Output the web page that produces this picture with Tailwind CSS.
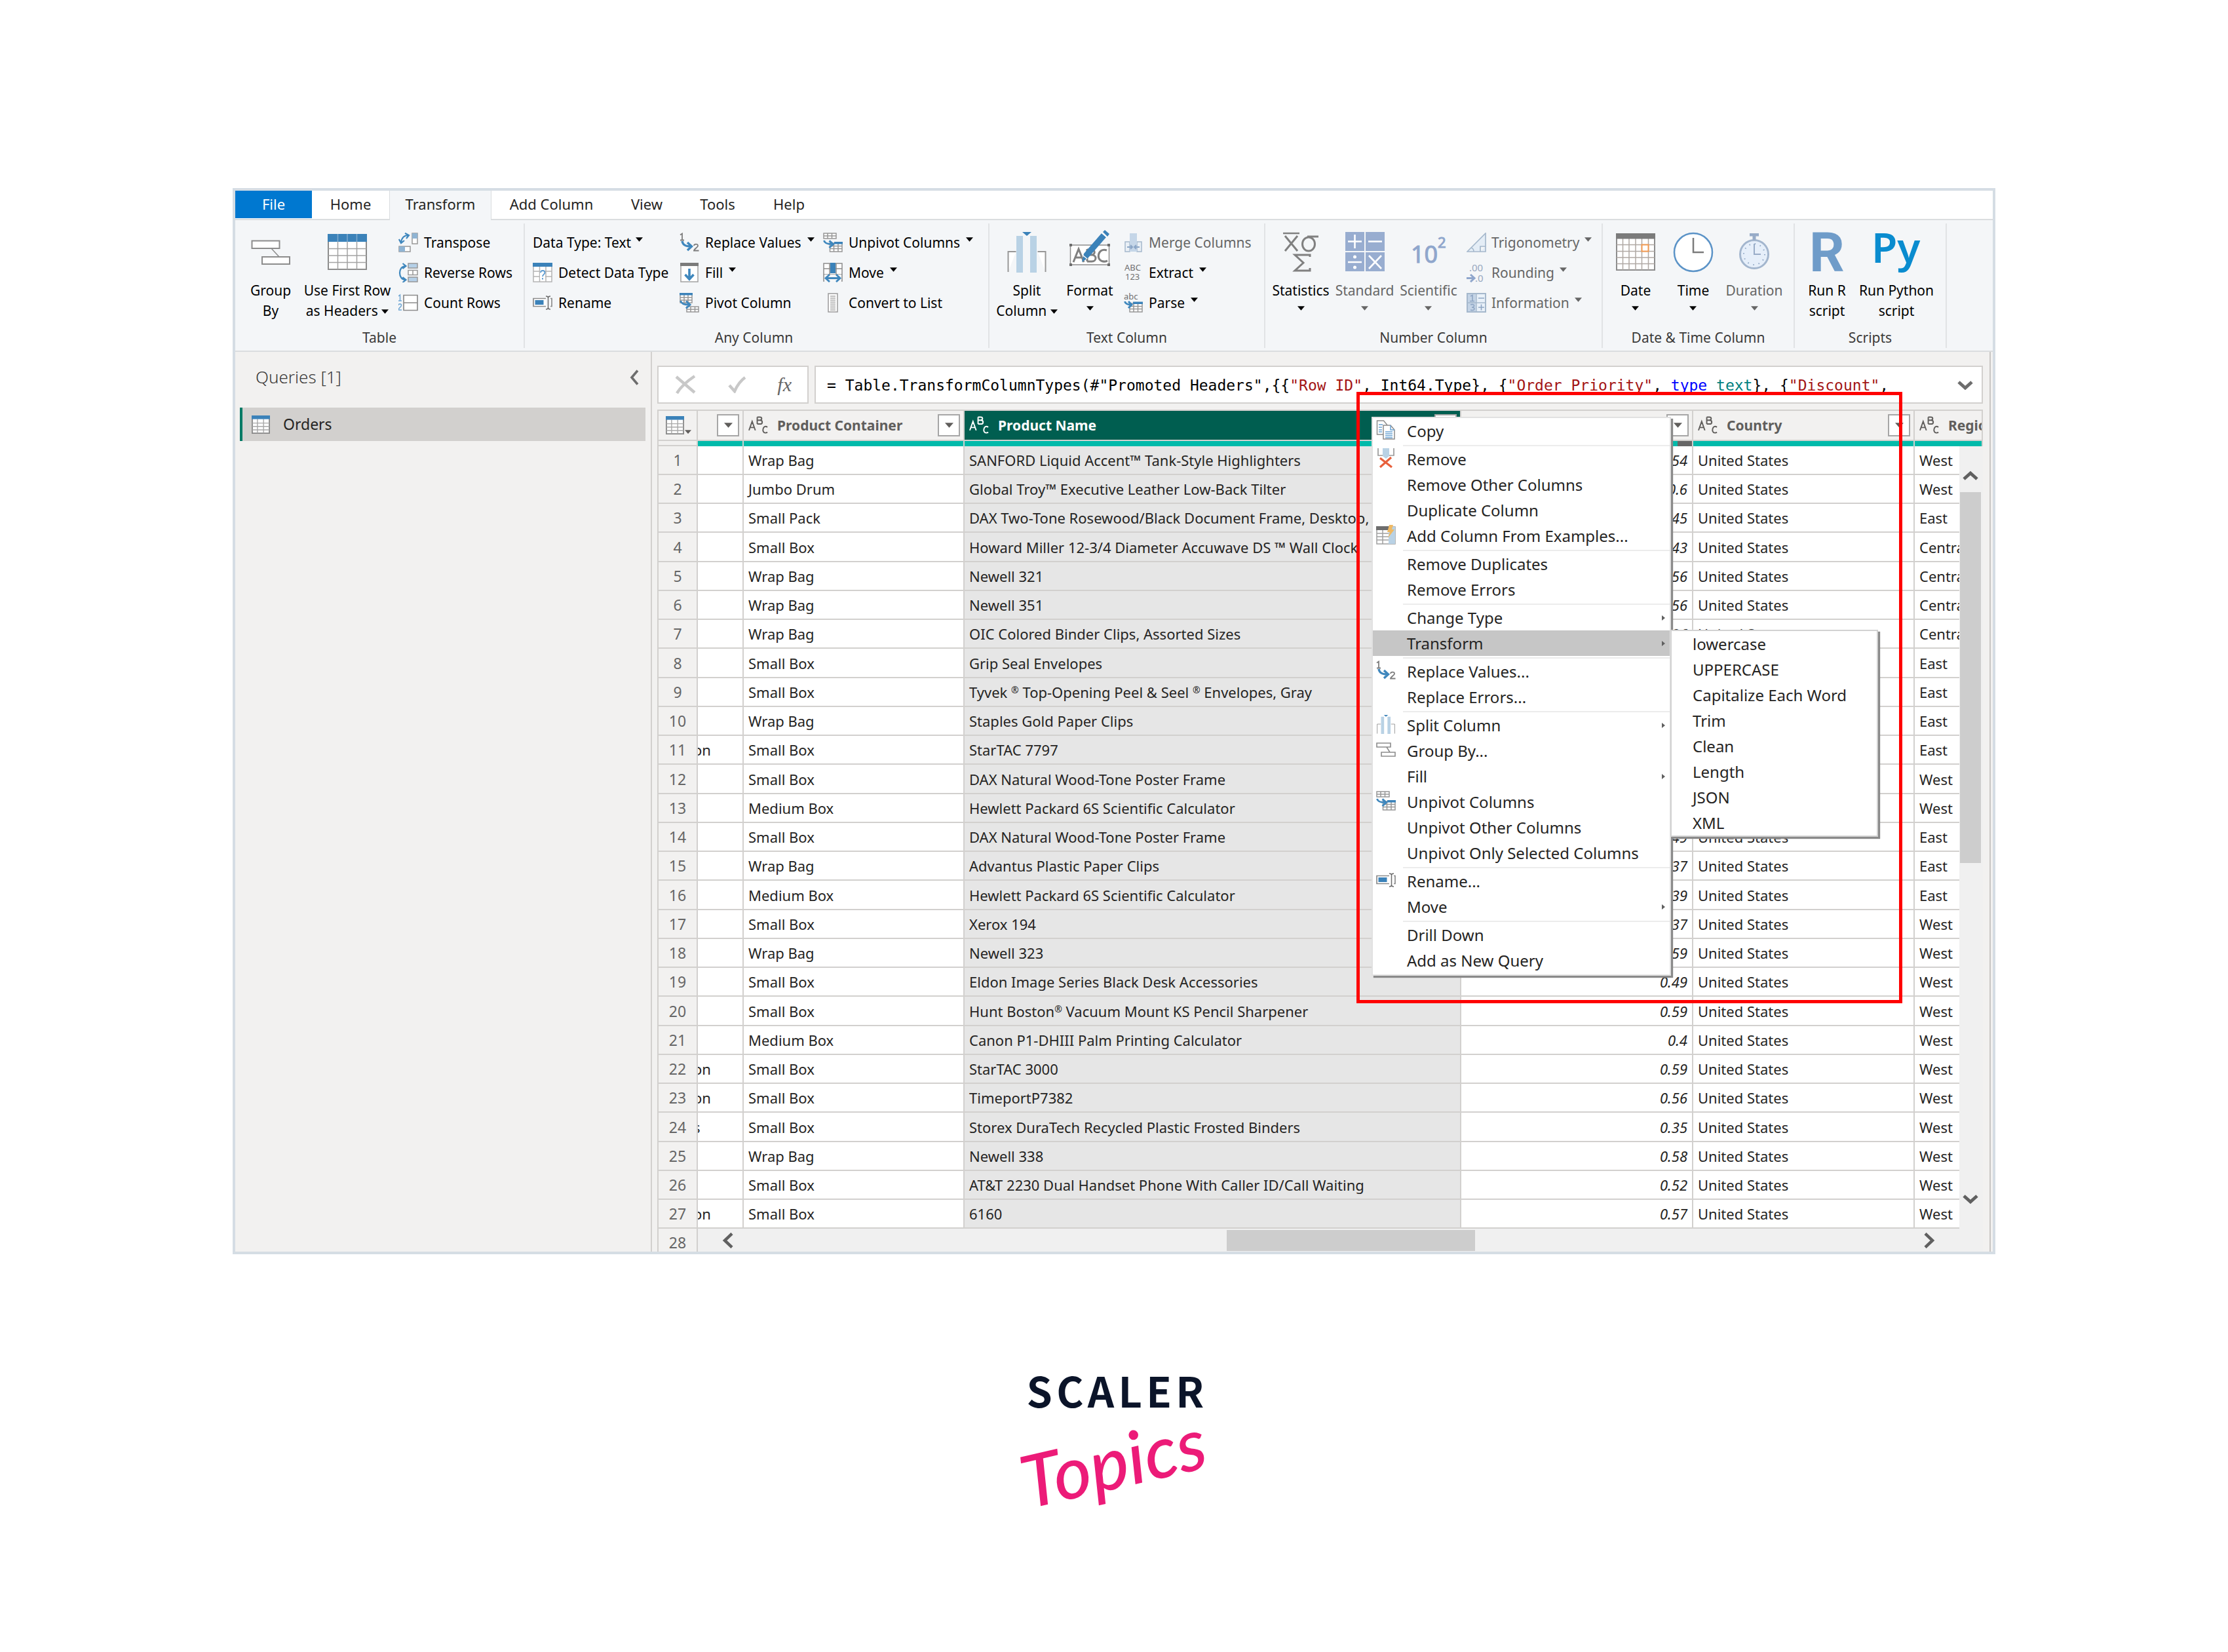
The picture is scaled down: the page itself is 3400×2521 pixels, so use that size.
<!DOCTYPE html>
<html lang="en">
<head>
<meta charset="utf-8">
<title>Power Query Editor - Transform column</title>
<script src="https://cdn.jsdelivr.net/npm/@tailwindcss/browser@4"></script>
</head>
<body class="bg-white text-[#252423]" style="font-family:'Noto Sans','Open Sans',sans-serif">

<!-- Shared icon symbols -->
<svg class="hidden" aria-hidden="true">
  <symbol id="caret" viewBox="0 0 12 8"><path d="M0 0h12L6 7z" fill="currentColor"/></symbol>
  <symbol id="table" viewBox="0 0 30 30">
    <rect x="1" y="1" width="28" height="28" fill="#fff" stroke="#8a8a8a" stroke-width="2"/>
    <path d="M9.500 6v23M19.500 6v23M1 12.500h28M1 18h28M1 23.500h28" stroke="#a8a8a8" stroke-width="1.500"/>
    <rect width="30" height="6" fill="#3b82b9"/>
  </symbol>
  <symbol id="groupby" viewBox="0 0 60 38">
    <rect x="1.500" y="1.500" width="42" height="11.500" fill="#fff" stroke="#8c8c8c" stroke-width="2"/>
    <rect x="17" y="26" width="42" height="11" fill="#fff" stroke="#8c8c8c" stroke-width="2"/>
    <path d="M31 13l12 13" stroke="#8c8c8c" stroke-width="1.500"/>
  </symbol>
  <symbol id="replace" viewBox="0 0 30 30">
    <path d="M1 3.500L4 1.500v10M1 11.500h6" fill="none" stroke="#7d7d7d" stroke-width="1.800"/>
    <path d="M22 20c0-3 6-3.500 6 0 0 2.500-6 5-6 7.500h7.500" fill="none" stroke="#7d7d7d" stroke-width="1.800"/>
    <path d="M4 13c1 6 5 8 13 8M12 15l6.500 6-6.500 6" fill="none" stroke="#3f87bd" stroke-width="3.400"/>
  </symbol>
  <symbol id="unpivot" viewBox="0 0 30 30">
    <path d="M1 1h19v8H1zM7 1v8M13.500 1v8M1 5h19" fill="#fff" stroke="#979797" stroke-width="1.500"/>
    <path d="M10.500 16h18.500v13H10.500zM16.500 16v13M23 16v13M10.500 20.500h18.500M10.500 24.500h18.500" fill="#fff" stroke="#979797" stroke-width="1.500"/>
    <rect x="17" y="14" width="13" height="3.500" fill="#3b82b9"/>
    <path d="M1.500 12c1 4 4 5.500 12 5.500M9.500 12.500l6 5-6 5.500" fill="none" stroke="#3f87bd" stroke-width="3"/>
  </symbol>
  <symbol id="pivot" viewBox="0 0 30 30">
    <path d="M1 1h18v14H1zM7 1v14M13 1v14M1 7h18M1 11h18" fill="#fff" stroke="#979797" stroke-width="1.500"/>
    <rect width="20" height="3.500" fill="#3b82b9"/>
    <path d="M11 21h18v8H11zM17 21v8M23.500 21v8M11 25h18" fill="#fff" stroke="#979797" stroke-width="1.500"/>
    <path d="M1.500 12c1 4 4 6 13 6M10 12.500l6 5.500-6 5.500" fill="none" stroke="#3f87bd" stroke-width="3"/>
  </symbol>
  <symbol id="rename" viewBox="0 0 30 22">
    <path d="M20 4.500H1v12h19M27 4.500h2v12h-2" fill="#fff" stroke="#8c8c8c" stroke-width="1.700"/>
    <rect x="3.500" y="7" width="13" height="7" fill="#3b82b9"/>
    <path d="M20 1c2 0 3.500.5 3.500 2.500v15c0 2-1.500 2.500-3.500 2.500M27 1c-2 0-3.500.5-3.500 2.500v15c0 2 1.500 2.500 3.500 2.500" fill="none" stroke="#6d6d6d" stroke-width="1.500"/>
  </symbol>
  <symbol id="split" viewBox="0 0 60 64">
    <path d="M1.500 63V32h12M46.500 32h12v31" fill="#fff" stroke="#979797" stroke-width="2"/>
    <rect x="14" y="8" width="10" height="56" fill="#b9d2e5"/><rect x="35" y="8" width="10" height="56" fill="#b9d2e5"/>
    <path d="M23 2h14l-7 6z" fill="#3b82b9"/>
  </symbol>
  <symbol id="abc" viewBox="0 0 32 30">
    <path d="M1 23L6 9l5 14M3 18.500h6M14 2v11M14 2h4c4 0 4 5 0 5h-4h4.500c4.500 0 4.500 6 0 6H14M30 18c-7-5-10 9-3 9 1.500 0 2-.3 3-1" fill="none" stroke="currentColor" stroke-width="2"/>
  </symbol>
  <symbol id="chev" viewBox="0 0 24 14"><path d="M2 2l10 9 10-9" fill="none" stroke="currentColor" stroke-width="5"/></symbol>
</svg>

<main class="px-[355px] pt-[287px]">
<section class="relative border-4 border-[#d5dde4] bg-[#f2f1f0]">

  <!-- Tab strip -->
  <nav class="flex h-[45px] border-b-2 border-[#dadddf] bg-white text-[22px] leading-[41px]">
    <a href="#" class="h-[42px] w-[117px] bg-[#0078d0] text-center text-white">File</a>
    <a href="#" class="w-[118px] text-center">Home</a>
    <a href="#" class="h-[45px] w-[156px] border-x border-[#dadddf] bg-[#f4f6f8] text-center">Transform</a>
    <a href="#" class="w-[183px] text-center">Add Column</a>
    <a href="#" class="w-[108px] text-center">View</a>
    <a href="#" class="w-[108px] text-center">Tools</a>
    <a href="#" class="w-[110px] text-center">Help</a>
  </nav>

  <!-- Ribbon -->
  <div class="flex h-[201px] border-b-2 border-[#dadddf] bg-[#f4f6f8] pt-[5px] pb-1 text-[21px] leading-[31px] whitespace-nowrap text-black">
    <div class="flex w-[442px] flex-col justify-between border-r-2 border-[#e1e3e5]">
      <div class="flex">
        <button class="flex w-[108px] flex-col items-center pt-[7px]">
          <span class="flex h-[80px] items-start pt-[18px]"><svg class="h-[38px] w-[60px]"><use href="#groupby"/></svg></span>
          <span>Group<br>By</span>
        </button>
        <button class="flex w-[126px] flex-col items-center pt-[7px]">
          <span class="flex h-[80px] items-start pt-[9px]">
            <svg class="h-[55px] w-[60px]" viewBox="0 0 60 55"><rect x="1" y="1" width="58" height="53" fill="#fff" stroke="#8c8c8c" stroke-width="2"/><path d="M1 22.500h58M1 33h58M1 43.500h58M15.500 12v42M30 12v42M44.500 12v42" stroke="#a2a2a2" stroke-width="1.500"/><path d="M0 0h60v12H0z" fill="#3b82b9"/><path d="M15.500 0v12M30 0v12M44.500 0v12" stroke="#7fabcf" stroke-width="1.500"/></svg>
          </span>
          <span>Use First Row<br>as Headers <svg class="inline h-[8px] w-[11px] align-middle"><use href="#caret"/></svg></span>
        </button>
        <div class="flex flex-col pt-[6px] pl-[15px] leading-[46px]">
          <button class="flex items-center gap-[9px]"><svg class="h-[30px] w-[30px]" viewBox="0 0 30 30"><rect x="21" y="1" width="8" height="16" fill="#fff" stroke="#979797" stroke-width="1.500"/><rect x="21" y="1" width="8" height="8" fill="#8fb4d3"/><rect x="1" y="21" width="17" height="8" fill="#fff" stroke="#979797" stroke-width="1.500"/><rect x="1" y="21" width="9" height="8" fill="#8fb4d3"/><path d="M15 4C8 4 5 8 4 15M10 .8L16 4l-4 5M.8 10L4 16l5-4" fill="none" stroke="#3f87bd" stroke-width="2.200"/></svg>Transpose</button>
          <button class="flex items-center gap-[9px]"><svg class="h-[30px] w-[30px]" viewBox="0 0 30 30"><g stroke="#979797" stroke-width="1.500"><rect x="15" y="1" width="14" height="7" fill="#b5d0e8"/><rect x="15" y="11.500" width="14" height="7" fill="#fff"/><path d="M22 11.500v7"/><rect x="15" y="22" width="14" height="7" fill="#b5d0e8"/></g><path d="M11 5C-1 5-1 26 11 26M6.500 1l5 4-5 4M6.500 22l5 4-5 4" fill="none" stroke="#3f87bd" stroke-width="2.200"/></svg>Reverse Rows</button>
          <button class="flex items-center gap-[9px]"><svg class="h-[30px] w-[30px]" viewBox="0 0 30 30"><path d="M8 3.500h21v23H8zM8 15h21" fill="#fff" stroke="#8c8c8c" stroke-width="1.700"/><path d="M0 5l2.500-2v9M0 12h5M0 19c0-3 4.500-3 4.500 0 0 2.500-4.500 4-4.500 7h5" fill="none" stroke="#6fa6d3" stroke-width="1.500"/></svg>Count Rows</button>
        </div>
      </div>
      <span class="text-center text-[#3b3a39]">Table</span>
    </div>

    <div class="flex w-[709px] flex-col justify-between border-r-2 border-[#e1e3e5]">
      <div class="flex pt-[6px] pl-[12px] leading-[46px]">
        <div class="flex w-[224px] flex-col">
          <button class="flex items-center gap-[7px]">Data Type: Text <svg class="mb-2 h-[8px] w-[11px]"><use href="#caret"/></svg></button>
          <button class="flex items-center gap-[9px]"><svg class="h-[30px] w-[30px]" viewBox="0 0 30 30"><path d="M1 1h28v28H1zM10.500 1v28M20 1v28M1 13h28M1 21h28" fill="#fff" stroke="#b4b4b4" stroke-width="1.500"/><path d="M11 12h8v13h-8z" fill="#fff"/><path d="M0 0h30v6H0z" fill="#3b82b9"/><path d="M12 15c0-4 6.500-4 6.500 0 0 2.500-3.500 3-3.500 6M15 23v2.500" fill="none" stroke="#5c9bd0" stroke-width="1.800"/></svg>Detect Data Type</button>
          <button class="flex items-center gap-[9px]"><svg class="h-[22px] w-[30px]"><use href="#rename"/></svg>Rename</button>
        </div>
        <div class="flex w-[219px] flex-col">
          <button class="flex items-center gap-[9px]"><svg class="h-[30px] w-[30px]"><use href="#replace"/></svg>Replace Values <svg class="mb-2 h-[8px] w-[11px]"><use href="#caret"/></svg></button>
          <button class="flex items-center gap-[9px]"><svg class="h-[30px] w-[30px]" viewBox="0 0 30 30"><rect x="2" y="1" width="26" height="28" fill="#fff" stroke="#a0a0a0" stroke-width="1.500"/><path d="M1 0h28v5H1z" fill="#7b7b7b"/><path d="M15 9v15M8.500 18l6.500 7 6.500-7" fill="none" stroke="#3f87bd" stroke-width="3.600"/></svg>Fill <svg class="mb-2 h-[8px] w-[11px]"><use href="#caret"/></svg></button>
          <button class="flex items-center gap-[9px]"><svg class="h-[30px] w-[30px]"><use href="#pivot"/></svg>Pivot Column</button>
        </div>
        <div class="flex flex-col">
          <button class="flex items-center gap-[9px]"><svg class="h-[30px] w-[30px]"><use href="#unpivot"/></svg>Unpivot Columns <svg class="mb-2 h-[8px] w-[11px]"><use href="#caret"/></svg></button>
          <button class="flex items-center gap-[9px]"><svg class="h-[30px] w-[30px]" viewBox="0 0 30 30"><path d="M1 1h28v27H1zM10 1v27M20 1v27M1 9h28M1 18h28" fill="#fff" stroke="#8c8c8c" stroke-width="1.500"/><path d="M11 0h8v16h-8z" fill="#3b82b9"/><path d="M2 18h26v12H2z" fill="#f4f6f8"/><path d="M5 23.500h20M10 18l-6 5.500 6 5.500M20 18l6 5.500-6 5.500" fill="none" stroke="#3f87bd" stroke-width="2.800"/></svg>Move <svg class="mb-2 h-[8px] w-[11px]"><use href="#caret"/></svg></button>
          <button class="flex items-center gap-[9px]"><svg class="h-[30px] w-[30px]" viewBox="0 0 30 30"><rect x="8" y="1" width="14" height="28" fill="#fff" stroke="#9a9a9a" stroke-width="1.500"/><path d="M11 5h8M11 8h8M11 11h8M11 14h8M11 17h8M11 20h8M11 23h8M11 26h8" stroke="#a9a9a9" stroke-width="1.300"/></svg>Convert to List</button>
        </div>
      </div>
      <span class="pr-2 text-center text-[#3b3a39]">Any Column</span>
    </div>

    <div class="flex w-[421px] flex-col justify-between border-r-2 border-[#e1e3e5]">
      <div class="flex pl-[5px]">
        <button class="flex w-[104px] flex-col items-center pt-[7px]">
          <span class="flex h-[80px] items-start pt-[4px]"><svg class="h-[64px] w-[60px]"><use href="#split"/></svg></span>
          <span>Split<br>Column <svg class="inline h-[8px] w-[11px] align-middle"><use href="#caret"/></svg></span>
        </button>
        <button class="flex w-[88px] flex-col items-center pt-[7px]">
          <span class="flex h-[80px] items-start pt-[3px]">
            <svg class="h-[56px] w-[64px]" viewBox="0 0 64 56"><rect x="2.500" y="23" width="59" height="30" fill="#fff" stroke="#8c8c8c" stroke-width="1.500"/><g fill="#6d6d6d"><path d="M1 21h4v4H1zM59 21h4v4h-4zM1 51h4v4H1zM59 51h4v4h-4z"/></g><path d="M7 49l8-20 8 20M10 42h10M28 29v19M28 30h6c7 0 7 8 0 8h-6h7c8 0 8 10 0 10h-7M58 31c-15-5-18 19-2 17l3-1" fill="none" stroke="#808080" stroke-width="3"/><path d="M20 49l3-13L50 5l7 6-27 31z" fill="#3b82b9"/><path d="M52 3l3-3 7 6-3 4z" fill="#3b82b9"/><path d="M22 39l6 5M50 4l8 7" stroke="#fff" stroke-width="1.500"/></svg>
          </span>
          <span>Format<br><svg class="mx-auto mt-2 h-[8px] w-[11px]"><use href="#caret"/></svg></span>
        </button>
        <div class="flex flex-col pt-[6px] pl-[8px] leading-[46px]">
          <button class="flex items-center gap-[9px] text-[#666]"><svg class="h-[30px] w-[29px]" viewBox="0 0 29 30"><path d="M2 14h7v15H2zM20 14h7v15h-7z" fill="#eaf0f6" stroke="#a5b8cc" stroke-width="1.500"/><rect x="9" y="1" width="11" height="28" fill="#c5d6e8"/><path d="M5 22h7M24 22h-7M10 19l3 3-3 3M19 19l-3 3 3 3" fill="none" stroke="#8ba6c6" stroke-width="2"/></svg>Merge Columns</button>
          <button class="flex items-center gap-[9px]"><svg class="h-[30px] w-[29px]" viewBox="0 0 29 30"><g font-size="13" fill="#707070"><text x="1" y="12">ABC</text><text x="2" y="26">123</text></g></svg>Extract <svg class="mb-2 h-[8px] w-[11px]"><use href="#caret"/></svg></button>
          <button class="flex items-center gap-[9px]"><svg class="h-[30px] w-[29px]" viewBox="0 0 29 30"><text x="0" y="10" font-size="13" fill="#707070">abc</text><path d="M9 16h19v13H9zM15 16v13M21.500 16v13M9 20.500h19M9 24.500h19" fill="#fff" stroke="#979797" stroke-width="1.500"/><path d="M14 13.500h15v3.500H14z" fill="#3b82b9"/><path d="M1.500 13c1 4 4 5 10 5M7 13l5 5-5 5" fill="none" stroke="#3f87bd" stroke-width="3"/></svg>Parse <svg class="mb-2 h-[8px] w-[11px]"><use href="#caret"/></svg></button>
        </div>
      </div>
      <span class="text-center text-[#3b3a39]">Text Column</span>
    </div>

    <div class="flex w-[515px] flex-col justify-between border-r-2 border-[#e1e3e5]">
      <div class="flex pl-[5px]">
        <button class="flex w-[98px] flex-col items-center pt-[7px]">
          <span class="flex h-[80px] items-start pt-[6px]">
            <svg class="h-[62px] w-[56px]" viewBox="0 0 56 62"><g fill="none" stroke="#808080" stroke-width="3"><path d="M1 2h25" stroke-width="2.500"/><path d="M4 6l19 23M23 6L4 29"/><ellipse cx="40" cy="18.500" rx="9.500" ry="10.500"/><path d="M38 7h17"/><path d="M42 38v-3H19l13 12-13 12h23v-4"/></g></svg>
          </span>
          <span>Statistics<br><svg class="mx-auto mt-2 h-[8px] w-[11px]"><use href="#caret"/></svg></span>
        </button>
        <button class="flex w-[97px] flex-col items-center pt-[7px] text-[#666]">
          <span class="flex h-[80px] items-start pt-[6px]">
            <svg class="h-[61px] w-[60px]" viewBox="0 0 60 61"><path d="M0 0h29v29H0zM31 0h29v29H31zM0 31h29v29H0zM31 31h29v29H31z" fill="#98add0"/><path d="M4 14.500h21M14.500 4v21M35 14.500h21M4 46h21M36 36l19 20M55 36L36 56" stroke="#fff" stroke-width="2.600"/><circle cx="14.500" cy="38" r="2.500" fill="#fff"/><circle cx="14.500" cy="54" r="2.500" fill="#fff"/></svg>
          </span>
          <span>Standard<br><svg class="mx-auto mt-2 h-[8px] w-[11px]"><use href="#caret"/></svg></span>
        </button>
        <button class="flex w-[98px] flex-col items-center pt-[7px] text-[#666]">
          <span class="flex h-[80px] items-start pt-[8px]">
            <svg class="h-[60px] w-[56px]" viewBox="0 0 56 60"><g fill="#8fa6cc" stroke="#8fa6cc"><text x="1" y="45" font-size="36" stroke-width="1">10</text><text x="42" y="22" font-size="22">2</text></g></svg>
          </span>
          <span>Scientific<br><svg class="mx-auto mt-2 h-[8px] w-[11px]"><use href="#caret"/></svg></span>
        </button>
        <div class="flex flex-col pt-[6px] pl-[9px] leading-[46px] text-[#666]">
          <button class="flex items-center gap-[8px]"><svg class="h-[30px] w-[30px]" viewBox="0 0 30 30"><path d="M1 29L29 1v28zM29 21h-8v8M7 23c3 1 4 3 4 6" fill="#e4edf6" stroke="#a5b8cc" stroke-width="1.700"/></svg>Trigonometry <svg class="mb-2 h-[8px] w-[11px]"><use href="#caret"/></svg></button>
          <button class="flex items-center gap-[8px]"><svg class="h-[30px] w-[30px]" viewBox="0 0 30 30"><g font-size="15" fill="#98a8c0"><text x="4" y="13">.00</text><text x="13" y="29">.0</text></g><path d="M0 23.500h11M6 18l6 5.500-6 5.500" fill="none" stroke="#8fa6cc" stroke-width="3"/></svg>Rounding <svg class="mb-2 h-[8px] w-[11px]"><use href="#caret"/></svg></button>
          <button class="flex items-center gap-[8px]"><svg class="h-[30px] w-[30px]" viewBox="0 0 30 30"><path d="M1 1h28v28H1z" fill="#e9f1f9" stroke="#a5b8cc" stroke-width="2"/><path d="M2 2h12v26H2z" fill="#c4d4e6"/><path d="M15 1v28M1 15h28" stroke="#a5b8cc" stroke-width="1.500"/><path d="M18 8h9M18 22h9M22.500 17.500v9M6 5l3-1.500v9M5 12.500h7M6 18c7-2 7 4 2 4 6 0 5 6-2 4" fill="none" stroke="#8fa6c4" stroke-width="1.600"/></svg>Information <svg class="mb-2 h-[8px] w-[11px]"><use href="#caret"/></svg></button>
        </div>
      </div>
      <span class="text-center text-[#3b3a39]">Number Column</span>
    </div>

    <div class="flex w-[293px] flex-col justify-between border-r-2 border-[#e1e3e5]">
      <div class="flex pl-[6px]">
        <button class="flex w-[88px] flex-col items-center pt-[7px]">
          <span class="flex h-[80px] items-start pt-[8px]">
            <svg class="h-[57px] w-[60px]" viewBox="0 0 60 57"><path d="M1 1h58v55H1z" fill="#fff" stroke="#8c8c8c" stroke-width="2"/><path d="M10.500 8v48M20 8v48M30 8v48M39.500 8v48M49.500 8v48M1 17.500h58M1 27.500h58M1 37h58M1 46.500h58" stroke="#b0a9a4" stroke-width="1.500"/><path d="M0 0h60v8.500H0z" fill="#7b7b7b"/><path d="M39.500 17.500h10v10h-10z" fill="#fff" stroke="#f29a52" stroke-width="2"/></svg>
          </span>
          <span>Date<br><svg class="mx-auto mt-2 h-[8px] w-[11px]"><use href="#caret"/></svg></span>
        </button>
        <button class="flex w-[88px] flex-col items-center pt-[7px]">
          <span class="flex h-[80px] items-start pt-[6px]">
            <svg class="h-[62px] w-[62px]" viewBox="0 0 62 62"><circle cx="31" cy="31" r="29" fill="#fff" stroke="#5b93c7" stroke-width="2.500"/><path d="M31 9v22h16" fill="none" stroke="#7b7b7b" stroke-width="2.500"/></svg>
          </span>
          <span>Time<br><svg class="mx-auto mt-2 h-[8px] w-[11px]"><use href="#caret"/></svg></span>
        </button>
        <button class="flex w-[98px] flex-col items-center pt-[7px] text-[#666]">
          <span class="flex h-[80px] items-start pt-[8px]">
            <svg class="h-[56px] w-[48px]" viewBox="0 0 48 56"><circle cx="24" cy="32" r="21.500" fill="#e6effa" stroke="#a3b6ce" stroke-width="3"/><circle cx="24" cy="32" r="16" fill="none" stroke="#8fa6c4" stroke-width="2" stroke-dasharray="1.500 6.900"/><path d="M17 2h14M24 2v8" stroke="#98acc8" stroke-width="5"/><path d="M24 16v16h10" fill="none" stroke="#98acc8" stroke-width="2"/></svg>
          </span>
          <span>Duration<br><svg class="mx-auto mt-2 h-[8px] w-[11px]"><use href="#caret"/></svg></span>
        </button>
      </div>
      <span class="text-center text-[#3b3a39]">Date &amp; Time Column</span>
    </div>

    <div class="flex w-[232px] flex-col justify-between border-r-2 border-[#e1e3e5]">
      <div class="flex pl-[10px]">
        <button class="flex w-[78px] flex-col items-center pt-[7px]">
          <span class="flex h-[80px] items-start pt-[5px]"><svg class="h-[62px] w-[56px]" viewBox="0 0 56 62"><text x="1" y="61" font-family="Roboto" font-weight="700" font-size="84" fill="#6f9cc9">R</text></svg></span>
          <span>Run R<br>script</span>
        </button>
        <button class="flex w-[134px] flex-col items-center pt-[7px]">
          <span class="flex h-[80px] items-start pt-[5px]"><svg class="h-[68px] w-[74px]" viewBox="0 0 74 68"><text x="-1" y="48" font-weight="600" font-size="64" fill="#0a8ccf">Py</text></svg></span>
          <span>Run Python<br>script</span>
        </button>
      </div>
      <span class="text-center text-[#3b3a39]">Scripts</span>
    </div>
  </div>

  <!-- Workspace -->
  <div class="flex">
    <aside class="w-[636px] shrink-0 border-r-2 border-[#d2d0ce] pr-[8px] pl-[7px]">
      <div class="flex h-[85px] items-center justify-between pr-[10px] pb-[8px] pl-[24px] text-[26px] font-light text-[#3b3a39]">
        <h2>Queries [1]</h2>
        <button aria-label="Collapse queries"><svg class="h-[24px] w-[14px] text-[#6d6d6d]" viewBox="0 0 14 24"><path d="M12 1.500L3 12l9 10.500" fill="none" stroke="currentColor" stroke-width="3.600"/></svg></button>
      </div>
      <a href="#" class="flex h-[51px] items-center gap-[19px] border-l-4 border-[#007a65] bg-[#d2d0ce] pl-[13px] text-[23px]"><svg class="h-[28px] w-[30px]"><use href="#table"/></svg>Orders</a>
    </aside>

    <div class="mr-[3px] min-w-0 flex-1 border-r-2 border-[#c8c6c4] pt-[21px] pr-[10px] pl-[8px]">
      <!-- Formula bar -->
      <div class="mb-[9px] flex h-[58px] gap-[9px]">
        <div class="flex w-[231px] items-center justify-between border-2 border-[#d2d0ce] bg-white pr-[24px] pl-[24px]">
          <button aria-label="Cancel"><svg class="h-[30px] w-[34px]" viewBox="0 0 34 30"><path d="M3 3l28 24M31 2C22 8 10 18 4 28" fill="none" stroke="#c8c8c8" stroke-width="4.500"/></svg></button>
          <button aria-label="Commit"><svg class="h-[26px] w-[28px]" viewBox="0 0 28 26"><path d="M2 14l8 9C14 14 19 7 26 2" fill="none" stroke="#c8c8c8" stroke-width="4.500"/></svg></button>
          <button class="text-[30px] leading-none text-[#666] italic" style="font-family:'Liberation Serif',serif">fx</button>
        </div>
        <div class="flex min-w-0 flex-1 items-center justify-between border-2 border-[#d2d0ce] bg-white pt-[2px] pr-[13px] pl-[17px]">
          <code class="text-[23px] whitespace-pre text-black" style="font-family:'DejaVu Sans Mono',monospace">= Table.TransformColumnTypes(#"Promoted Headers",{{<span class="text-[#a31515]">"Row ID"</span>, Int64.Type}, {<span class="text-[#a31515]">"Order Priority"</span>, <span class="text-[#0000ff]">type</span> <span class="text-[#008080]">text</span>}, {<span class="text-[#a31515]">"Discount"</span>,</code>
          <button aria-label="Expand formula bar" class="text-[#6d6d6d]"><svg class="h-[14px] w-[24px]"><use href="#chev"/></svg></button>
        </div>
      </div>

      <!-- Data preview -->
      <div class="relative overflow-hidden">
        <table class="w-full table-fixed border-separate border-spacing-0 border-t-2 border-l-2 border-[#d2d0ce] text-[22px] leading-[42px] whitespace-nowrap">
          <colgroup><col class="w-[60px]"><col class="w-[70px]"><col class="w-[337px]"><col class="w-[758px]"><col class="w-[354px]"><col class="w-[338px]"><col></colgroup>
          <thead class="text-left text-[21px] text-[#605e5c]">
            <tr class="h-[46px]" id="head"></tr>
            <tr class="h-[8px]" id="quality"></tr>
          </thead>
          <tbody id="rows"></tbody>
        </table>
        <!-- Vertical scroll bar -->
        <div class="absolute top-[56px] right-0 bottom-0 flex w-[36px] flex-col items-center bg-[#f0f0f0] pr-[2px] text-[#606060]">
          <svg class="mt-[37px] h-[16px] w-[24px] rotate-180"><use href="#chev"/></svg>
          <div class="mt-[17px] h-[566px] w-[32px] bg-[#cdcdcd]"></div>
          <svg class="mt-auto mb-[72px] h-[16px] w-[24px]"><use href="#chev"/></svg>
        </div>
      </div>
    </div>
  </div>

  <!-- Column context menu -->
  <ul id="menu" class="absolute top-[345px] left-[1734px] w-[457px] border-2 border-[#e1e1e1] bg-white pb-[2px] text-[24px] leading-[39px] shadow-[3px_3px_1px_#8a8a8a]"></ul>
  <ul id="submenu" class="absolute top-[670px] left-[2190px] w-[317px] border-2 border-[#d2d2d2] bg-white text-[24px] leading-[39px] shadow-[3px_3px_1px_#8a8a8a]"></ul>

  <!-- Highlight frame -->
  <div class="absolute top-[307px] left-[1711px] h-[933px] w-[833px] border-[5px] border-[#ff0000]"></div>
</section>

<!-- Brand -->
<footer class="flex flex-col items-center pt-[161px] pb-[160px]">
  <div class="pl-[10px] text-[63px] leading-[92px] font-bold tracking-widest text-[#0b1429]" style="font-family:'Noto Sans CJK SC',sans-serif">SCALER</div>
  <svg class="-mt-[20px] h-[200px] w-[320px]" viewBox="0 0 320 200" role="img" aria-label="Topics"><text x="28" y="156" transform="rotate(-13 28 156)" font-family="Lato" font-style="italic" font-weight="500" font-size="111" fill="#ec1b78">Topics</text></svg>
</footer>
</main>

<script>
const caret = '<svg class="h-[9px] w-[13px] text-[#605e5c]"><use href="#caret"/></svg>';
const filter = `<button aria-label="Filter" class="flex h-[34px] w-[34px] shrink-0 items-center justify-center border-2 border-[#a6a6a6] bg-white">${caret}</button>`;
const abc = '<svg class="h-[30px] w-[31px] shrink-0"><use href="#abc"/></svg>';

// Header cells: [title, extra classes, has filter]
const heads = [['', '', true], ['Product Container', '', true], ['Product Name', 'bg-[#005e50] text-white', true], ['', '', true], ['Country', '', true], ['Region', '', false]];
document.getElementById('head').innerHTML =
  '<th class="border-r-2 border-b-2 border-[#d2d0ce] p-0"><button aria-label="Table options" class="flex items-end pl-[10px] text-[#605e5c]"><svg class="h-[28px] w-[30px]"><use href="#table"/></svg><svg class="h-[7px] w-[10px]"><use href="#caret"/></svg></button></th>' +
  heads.map(([t, c, f]) => `<th class="border-r-2 border-b-2 border-[#d2d0ce] p-0 ${c}"><div class="flex items-center overflow-hidden pr-[5px] pl-[7px]">${t ? abc + `<span class="pl-[13px] font-bold">${t}</span>` : ''}<span class="flex-1"></span>${f ? filter : ''}</div></th>`).join('');
document.getElementById('quality').innerHTML =
  '<td class="border-r-2 border-b-2 border-[#d2d0ce] p-0"></td>' +
  [0, 0, 0, 1, 0, 0].map(g => `<td class="h-[8px] border-r-2 border-[#d2d0ce] p-0 leading-[0px]"><div class="flex h-[8px] bg-[#00baaa]">${g ? '<span class="ml-auto h-[8px] w-[22px] bg-[#666]"></span>' : ''}</div></td>`).join('');

const data = [
  ['', 'Wrap Bag', 'SANFORD Liquid Accent™ Tank-Style Highlighters', '0.54', 'West'],
  ['', 'Jumbo Drum', 'Global Troy™ Executive Leather Low-Back Tilter', '0.6', 'West'],
  ['', 'Small Pack', 'DAX Two-Tone Rosewood/Black Document Frame, Desktop,', '0.45', 'East'],
  ['', 'Small Box', 'Howard Miller 12-3/4 Diameter Accuwave DS ™ Wall Clock', '0.43', 'Central'],
  ['', 'Wrap Bag', 'Newell 321', '0.56', 'Central'],
  ['', 'Wrap Bag', 'Newell 351', '0.56', 'Central'],
  ['', 'Wrap Bag', 'OIC Colored Binder Clips, Assorted Sizes', '0.36', 'Central'],
  ['', 'Small Box', 'Grip Seal Envelopes', '', 'East'],
  ['', 'Small Box', 'Tyvek ® Top-Opening Peel & Seel ® Envelopes, Gray', '', 'East'],
  ['', 'Wrap Bag', 'Staples Gold Paper Clips', '', 'East'],
  ['on', 'Small Box', 'StarTAC 7797', '', 'East'],
  ['', 'Small Box', 'DAX Natural Wood-Tone Poster Frame', '', 'West'],
  ['', 'Medium Box', 'Hewlett Packard 6S Scientific Calculator', '', 'West'],
  ['', 'Small Box', 'DAX Natural Wood-Tone Poster Frame', '0.49', 'East'],
  ['', 'Wrap Bag', 'Advantus Plastic Paper Clips', '0.37', 'East'],
  ['', 'Medium Box', 'Hewlett Packard 6S Scientific Calculator', '0.39', 'East'],
  ['', 'Small Box', 'Xerox 194', '0.37', 'West'],
  ['', 'Wrap Bag', 'Newell 323', '0.59', 'West'],
  ['', 'Small Box', 'Eldon Image Series Black Desk Accessories', '0.49', 'West'],
  ['', 'Small Box', 'Hunt Boston® Vacuum Mount KS Pencil Sharpener', '0.59', 'West'],
  ['', 'Medium Box', 'Canon P1-DHIII Palm Printing Calculator', '0.4', 'West'],
  ['on', 'Small Box', 'StarTAC 3000', '0.59', 'West'],
  ['on', 'Small Box', 'TimeportP7382', '0.56', 'West'],
  ['s', 'Small Box', 'Storex DuraTech Recycled Plastic Frosted Binders', '0.35', 'West'],
  ['', 'Wrap Bag', 'Newell 338', '0.58', 'West'],
  ['', 'Small Box', 'AT&T 2230 Dual Handset Phone With Caller ID/Call Waiting', '0.52', 'West'],
  ['on', 'Small Box', '6160', '0.57', 'West'],
];
const cell = 'border-r-2 border-b-2 border-[#d2d0ce] py-0 overflow-hidden';
const esc = s => s.replace(/&/g, '&amp;').replace(/®/g, '<sup class="text-[14px]">®</sup>');
document.getElementById('rows').innerHTML = data.map((r, i) => `<tr class="h-[44px] bg-white nth-[4n]:h-[45px]">
  <td class="${cell} bg-[#f2f1f0] px-0 text-center text-[23px] text-[#666]">${i + 1}</td>
  <td class="${cell} px-0 -indent-[7px]">${r[0]}</td>
  <td class="${cell} px-[7px]">${r[1]}</td>
  <td class="${cell} bg-[#e6e6e6] px-[7px]">${esc(r[2])}</td>
  <td class="${cell} px-[7px] text-right italic">${r[3]}</td>
  <td class="${cell} px-[7px]">${r[3] ? 'United States' : ''}</td>
  <td class="${cell} px-[7px]">${r[4]}</td></tr>`).join('') +
  `<tr><td class="border-r-2 border-[#d2d0ce] p-0 text-center text-[23px] text-[#666]"><div class="h-[35px] overflow-hidden leading-[42px]">28</div></td>
  <td colspan="6" class="bg-[#f0f0f0] p-0"><div class="flex h-[35px] items-center pr-[73px] pl-[37px] text-[#606060]">
    <svg class="h-[24px] w-[18px]" viewBox="0 0 18 24"><path d="M15 1.500L4 12l11 10.500" fill="none" stroke="currentColor" stroke-width="4.500"/></svg>
    <span class="ml-[752px] h-[32px] w-[379px] bg-[#cdcdcd]"></span>
    <svg class="ml-auto h-[24px] w-[18px]" viewBox="0 0 18 24"><path d="M3 1.500L14 12 3 22.500" fill="none" stroke="currentColor" stroke-width="4.500"/></svg>
  </div></td></tr>`;

const icons = {
  copy: '<svg class="h-[30px] w-[30px]" viewBox="0 0 30 30"><path d="M1.500 1h10l5 6v15h-15z" fill="#fff" stroke="#8c8c8c" stroke-width="1.500"/><path d="M11 8h11l6 7v14H11z" fill="#fff" stroke="#8c8c8c" stroke-width="1.500"/><path d="M22 8v7h6M4 7h6M4 11h5M4 15h5M4 18h5M14 18h11M14 21h11M14 24h11M14 27h11" fill="none" stroke="#6aa3d3" stroke-width="1.500"/></svg>',
  remove: '<svg class="h-[30px] w-[30px]" viewBox="0 0 30 30"><path d="M3 0v11h7M27 0v11h-7" fill="none" stroke="#9a9a9a" stroke-width="1.700"/><path d="M10 0h10v12l-5 4-5-4z" fill="#b9d2e5"/><path d="M6 15l18 14M23 14L6 29" stroke="#e8603c" stroke-width="3.200"/></svg>',
  example: '<svg class="h-[30px] w-[30px]" viewBox="0 0 30 30"><path d="M1 3h28v26H1zM10 3v26M1 13h18M1 18h18M1 23h18" fill="#fff" stroke="#a0a0a0" stroke-width="1.500"/><path d="M19 3h10v26H19z" fill="#b9d2e5"/><path d="M0 2h20v6H0z" fill="#6d6d6d"/><path d="M20 0h6l-2 7h4L18 20l3-9h-4z" fill="#efb964"/></svg>',
  replace: '<svg class="h-[30px] w-[30px]"><use href="#replace"/></svg>',
  split: '<svg class="h-[30px] w-[30px]"><use href="#split"/></svg>',
  groupby: '<svg class="h-[22px] w-[30px]" viewBox="0 0 30 22"><path d="M1 1h21v6H1zM8 15h21v6H8zM16 7l5 8" fill="none" stroke="#8c8c8c" stroke-width="1.600"/></svg>',
  unpivot: '<svg class="h-[30px] w-[30px]"><use href="#unpivot"/></svg>',
  rename: '<svg class="h-[22px] w-[30px]"><use href="#rename"/></svg>',
};
// Menu entries: [label, icon, has submenu]; null draws a separator
const menu = [['Copy', 'copy'], null, ['Remove', 'remove'], ['Remove Other Columns'], ['Duplicate Column'], ['Add Column From Examples...', 'example'], null,
  ['Remove Duplicates'], ['Remove Errors'], null, ['Change Type', '', 1], ['Transform', '', 1], null, ['Replace Values...', 'replace'], ['Replace Errors...'], null,
  ['Split Column', 'split', 1], ['Group By...', 'groupby'], ['Fill', '', 1], ['Unpivot Columns', 'unpivot'], ['Unpivot Other Columns'], ['Unpivot Only Selected Columns'], null,
  ['Rename...', 'rename'], ['Move', '', 1], null, ['Drill Down'], ['Add as New Query']];
document.getElementById('menu').innerHTML = menu.map(m => m === null
  ? '<li class="ml-[46px] h-[4px] border-b-2 border-[#ececec]"></li>'
  : `<li><button class="flex h-[39px] w-full items-center pr-[7px] pl-[5px] text-left ${m[0] === 'Transform' ? 'bg-[#c6c6c6]' : ''}"><span class="w-[47px] shrink-0 pb-1">${icons[m[1]] || ''}</span><span class="flex-1">${m[0]}</span>${m[2] ? '<svg class="h-[8px] w-[5px]" viewBox="0 0 5 8"><path d="M0 0l5 4-5 4z" fill="#606060"/></svg>' : ''}</button></li>`).join('');
document.getElementById('submenu').innerHTML = ['lowercase', 'UPPERCASE', 'Capitalize Each Word', 'Trim', 'Clean', 'Length', 'JSON', 'XML']
  .map(t => `<li><button class="h-[39px] w-full pl-[32px] text-left">${t}</button></li>`).join('');
</script>
</body>
</html>
